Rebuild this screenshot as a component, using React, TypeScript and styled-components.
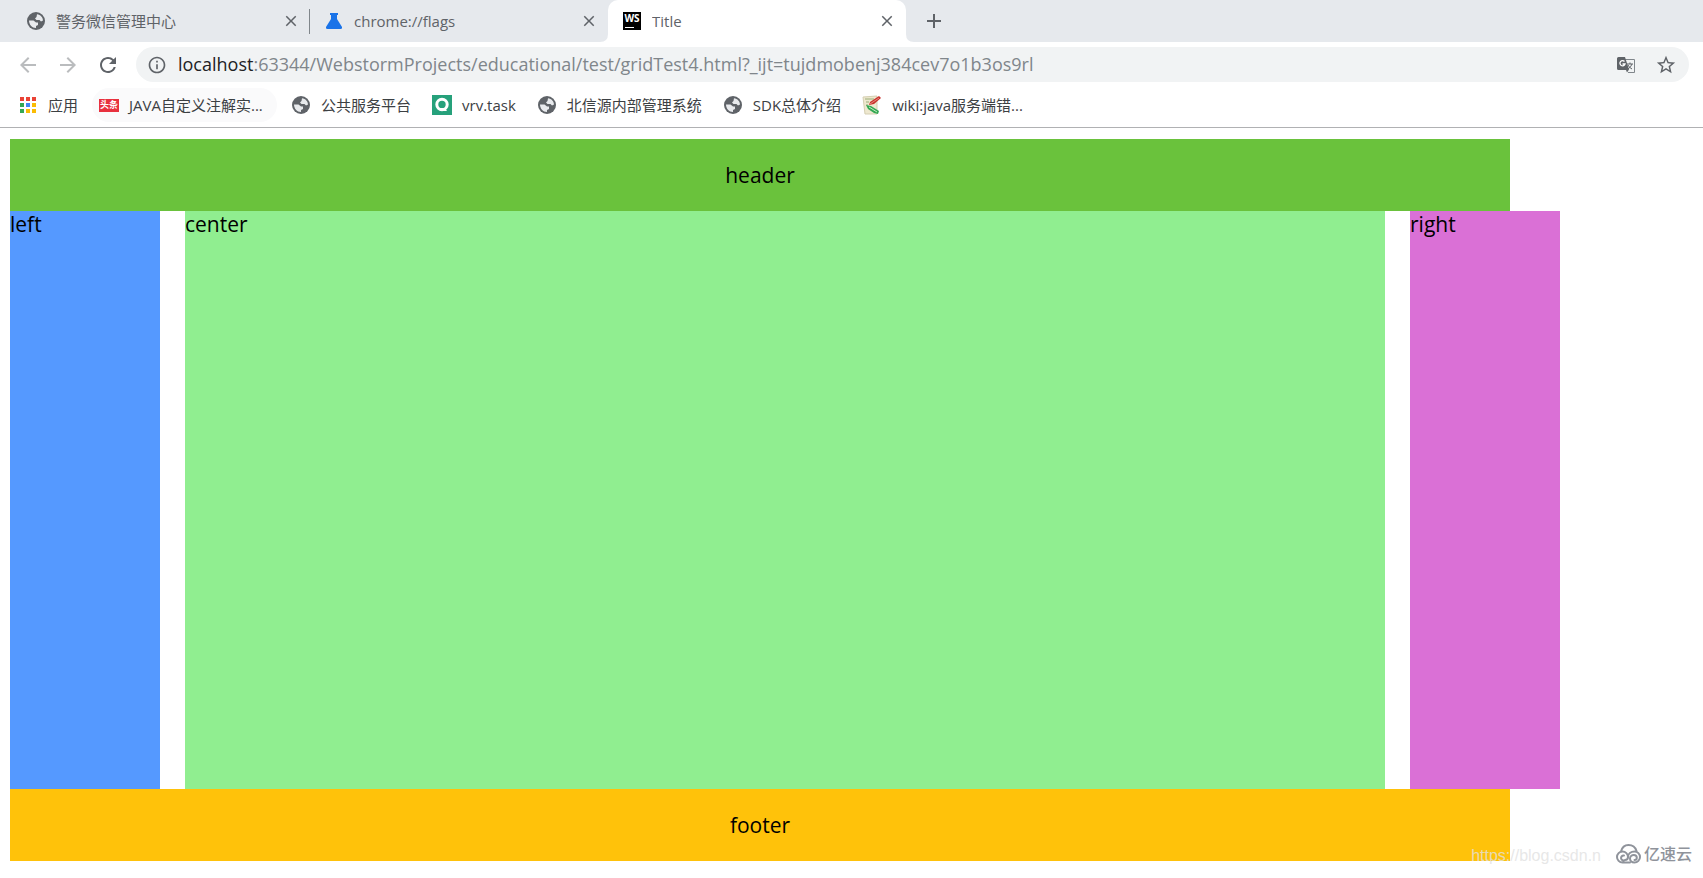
import React from 'react';
import styled, { createGlobalStyle } from 'styled-components';
import {
  MdAdd,
  MdArrowBack,
  MdArrowForward,
  MdClose,
  MdInfoOutline,
  MdRefresh,
  MdStarBorder,
} from 'react-icons/md';

const GlobalStyle = createGlobalStyle`
  * { box-sizing: border-box; }
  body {
    margin: 0;
    background: #fff;
    color: #000;
    font-family: "Open Sans", "Noto Sans CJK SC", sans-serif;
  }
`;

const Window = styled.div`
  display: flex;
  flex-direction: column;
  min-height: 100vh;
  overflow: hidden;
`;

const TabStrip = styled.nav`
  display: flex;
  height: 42px;
  padding-left: 12px;
  background: #e6e9ed;
`;

const Tab = styled.div<{ $active?: boolean; $divided?: boolean }>`
  position: relative;
  display: flex;
  align-items: center;
  gap: 11px;
  flex: 0 1 298px;
  min-width: 0;
  padding: 0 10px 0 15px;
  color: #5f6368;
  font-size: 15px;
  line-height: 20px;
  background: ${(p) => (p.$active ? '#fff' : 'transparent')};
  border-radius: 10px 10px 0 0;

  &::after {
    content: '';
    display: ${(p) => (p.$divided ? 'block' : 'none')};
    position: absolute;
    right: 0;
    top: 9px;
    width: 1px;
    height: 25px;
    background: #80868b;
  }
`;

const TabFoot = styled.svg<{ $side: 'left' | 'right' }>`
  position: absolute;
  bottom: 0;
  ${(p) => p.$side}: -8px;
  width: 8px;
  height: 8px;
`;

const TabTitle = styled.span`
  flex: 1;
  overflow: hidden;
  white-space: nowrap;
`;

const IconButton = styled.button<{ $size?: number; $faded?: boolean }>`
  display: flex;
  align-items: center;
  justify-content: center;
  flex: none;
  width: ${(p) => p.$size ?? 18}px;
  height: ${(p) => p.$size ?? 18}px;
  padding: 0;
  border: 0;
  background: none;
  color: ${(p) => (p.$faded ? '#babcbe' : '#5f6368')};
`;

const NewTabButton = styled(IconButton)`
  align-self: center;
  margin-left: 16px;
`;

const Toolbar = styled.div`
  display: flex;
  align-items: center;
  gap: 16px;
  height: 45px;
  padding: 0 14px 0 16px;
`;

const AddressBar = styled.div`
  display: flex;
  align-items: center;
  flex: 1;
  gap: 11px;
  height: 35px;
  min-width: 0;
  padding: 0 12px 0 11px;
  border-radius: 18px;
  background: #f1f3f4;
`;

const Url = styled.a`
  flex: 1;
  overflow: hidden;
  padding-bottom: 2px;
  color: #80868b;
  font-size: 18px;
  line-height: 26px;
  text-decoration: none;
  white-space: nowrap;
`;

const Host = styled.span`
  color: #202124;
`;

const AddressActions = styled.div`
  display: flex;
  align-items: center;
  gap: 20px;
`;

const BookmarkBar = styled.nav`
  display: flex;
  align-items: center;
  gap: 21px;
  height: 41px;
  padding: 0 18px 4px;
  border-bottom: 1px solid #b0b1b3;
`;

const Bookmark = styled.a<{ $truncated?: boolean; $hovered?: boolean }>`
  display: flex;
  align-items: center;
  gap: 10px;
  min-width: ${(p) => (p.$truncated ? '171px' : 'auto')};
  color: #3c4043;
  font-size: 15px;
  line-height: 20px;
  text-decoration: none;
  white-space: nowrap;
  border-radius: 10px;
  background: ${(p) => (p.$hovered ? '#fafafb' : 'transparent')};
  box-shadow: ${(p) => (p.$hovered ? '0 0 0 7px #fafafb' : 'none')};
`;

const IconSlot = styled.span<{ $size?: number }>`
  display: flex;
  align-items: center;
  justify-content: center;
  flex: none;
  width: ${(p) => p.$size ?? 20}px;
  height: ${(p) => p.$size ?? 20}px;
`;

const ToutiaoIcon = styled.span`
  width: 20px;
  height: 13px;
  background: #e8313e;
  color: #fff;
  font-size: 9px;
  font-weight: 700;
  line-height: 12px;
  text-align: center;
`;

const WebStormIcon = styled.span`
  flex: none;
  width: 18px;
  height: 18px;
  background: #000;
  color: #fff;
  font-size: 10px;
  font-weight: 700;
  line-height: 13px;
  text-align: center;

  &::after {
    content: '';
    display: block;
    width: 9px;
    height: 1px;
    margin: 2px 0 0 2px;
    background: #fff;
  }
`;

const Viewport = styled.main`
  display: flex;
  flex-direction: column;
  flex: 1;
  padding: 11px 193px 17px 10px;
  font-size: 21px;
  line-height: 26px;
`;

const Band = styled.div<{ $color: string }>`
  display: flex;
  align-items: center;
  justify-content: center;
  height: 72px;
  background: ${(p) => p.$color};
`;

const Columns = styled.div`
  display: grid;
  grid-template-columns: 10% 80% 10%;
  column-gap: 25px;
  flex: 1;
  min-height: 200px;
`;

const Column = styled.section<{ $color: string }>`
  background: ${(p) => p.$color};
`;

const Watermarks = styled.div`
  position: absolute;
  right: 11px;
  bottom: 10px;
  display: flex;
  align-items: center;
  gap: 15px;
`;

const BlogMark = styled.span`
  color: rgba(225, 225, 225, 0.8);
  font-family: "Liberation Sans", sans-serif;
  font-size: 16px;
  line-height: 20px;
`;

const CloudMark = styled.span`
  display: flex;
  align-items: center;
  gap: 2px;
  padding-bottom: 4px;
  color: #8f939b;
  font-size: 16px;
  font-weight: 500;
  line-height: 20px;
`;

function Globe() {
  return (
    <svg width="18" height="18" viewBox="0 0 18 18" aria-hidden="true">
      <circle cx="9" cy="9" r="9" fill="#5f6368" />
      <path
        d="M10 2.2C13.5 2.5 16 5.500 16 8.500L14 9.500 12.500 8H9.500L8 6.500 9.500 5ZM2 8.500H6.500L9 10.500H11V13L9 14V16C5 16 2 12.500 2 8.500Z"
        fill="#e8eaed"
      />
    </svg>
  );
}

function Flask() {
  return (
    <svg width="16" height="16" viewBox="0 0 16 16" aria-hidden="true">
      <path d="M4 0h8v2h-1v4l5 8q.500 2-1.500 2h-13Q-.500 16 0 14L5 6V2H4Z" fill="#1a73e8" />
    </svg>
  );
}

function AppsGrid() {
  const colors = ['#ea4335', '#ea4335', '#ea4335', '#34a853', '#4285f4', '#fbbc04', '#34a853', '#fbbc04', '#fbbc04'];
  return (
    <svg width="16" height="16" viewBox="0 0 16 16" aria-hidden="true">
      {colors.map((c, i) => (
        <rect key={i} x={(i % 3) * 6} y={Math.floor(i / 3) * 6} width="4" height="4" fill={c} />
      ))}
    </svg>
  );
}

function VrvIcon() {
  return (
    <svg width="20" height="20" viewBox="0 0 20 20" aria-hidden="true">
      <rect width="20" height="20" fill="#26a17b" />
      <circle cx="10" cy="9.500" r="5.200" fill="none" stroke="#fff" strokeWidth="3" />
      <path d="M8 13h5l2 3H8Z" fill="#fff" />
    </svg>
  );
}

function WikiIcon() {
  return (
    <svg width="20" height="20" viewBox="0 0 20 20" aria-hidden="true">
      <path d="M1 2l14-1v18H3Z" fill="#eee8cf" stroke="#d5cfb2" />
      <path d="M3 4h9M4 7h3M4 10h2" stroke="#9aae79" />
      <path d="M17 1l2 2-7 6-5 1 1-3Z" fill="#c9302c" />
      <path d="M8 9l9-6" stroke="#e88a80" />
      <path d="M4 10l5 1 8 5-1 3-4-1-6-4Z" fill="#34a853" />
      <path d="M7 12l8 5" stroke="#c4ecc4" />
    </svg>
  );
}

function TranslateIcon() {
  return (
    <svg width="18" height="18" viewBox="0 0 18 18" aria-hidden="true">
      <path d="M8 3.500h9.500v13H11" fill="#f1f3f4" stroke="#80868b" />
      <path d="M10 8h6M13 6.500V8M15 8q-1 3-4 5M11 9q1 2.500 4 4" fill="none" stroke="#5f6368" />
      <path d="M1.500 1H8l4 12.500L10 16.500 9 14H1.500Q0 14 0 12.500v-10Q0 1 1.500 1Z" fill="#5f6368" />
      <path d="M7.500 5.500A2.600 2.600 0 1 0 8 8H5.500" fill="none" stroke="#fff" strokeWidth="1.300" />
    </svg>
  );
}

function CloudLogo() {
  return (
    <svg width="26" height="20" viewBox="0 0 26 20" fill="none" stroke="#8f939b" strokeWidth="2" strokeLinecap="round" aria-hidden="true">
      <path d="M5 7.500C6 3.500 9 1 12.500 1c4 0 7 2.500 8 6" />
      <path d="M14 18.500H6.500a5.500 5.500 0 1 1 5.500-5.500c0 2-1.500 3-3 3a2.500 2.500 0 1 1-1-4.500" />
      <path d="M12 13c0-3.500 3-5.500 6.500-5.500a5.500 5.500 0 0 1 0 11c-3 0-4.500-2-4.500-4s1.800-3.500 3.800-3.500 3 1.500 3 2.800-1 2.200-2.300 2.200" />
    </svg>
  );
}

function CloseButton({ label }: { label: string }) {
  return (
    <IconButton aria-label={label}>
      <MdClose size={18} />
    </IconButton>
  );
}

const bookmarks = [
  { title: '应用', icon: <AppsGrid /> },
  { title: 'JAVA自定义注解实...', icon: <ToutiaoIcon>头条</ToutiaoIcon>, truncated: true, hovered: true },
  { title: '公共服务平台', icon: <Globe /> },
  { title: 'vrv.task', icon: <VrvIcon /> },
  { title: '北信源内部管理系统', icon: <Globe /> },
  { title: 'SDK总体介绍', icon: <Globe /> },
  { title: 'wiki:java服务端错...', icon: <WikiIcon />, truncated: true },
];

export default function App() {
  return (
    <Window>
      <GlobalStyle />
      <TabStrip>
        <Tab $divided>
          <IconSlot $size={18}><Globe /></IconSlot>
          <TabTitle>警务微信管理中心</TabTitle>
          <CloseButton label="Close tab" />
        </Tab>
        <Tab>
          <IconSlot $size={18}><Flask /></IconSlot>
          <TabTitle>chrome://flags</TabTitle>
          <CloseButton label="Close tab" />
        </Tab>
        <Tab $active>
          <TabFoot $side="left" viewBox="0 0 8 8"><path d="M8 0v8H0q8 0 8-8Z" fill="#fff" /></TabFoot>
          <WebStormIcon>WS</WebStormIcon>
          <TabTitle>Title</TabTitle>
          <CloseButton label="Close tab" />
          <TabFoot $side="right" viewBox="0 0 8 8"><path d="M0 0v8h8q-8 0-8-8Z" fill="#fff" /></TabFoot>
        </Tab>
        <NewTabButton aria-label="New tab" $size={24}><MdAdd size={24} /></NewTabButton>
      </TabStrip>
      <Toolbar>
        <IconButton aria-label="Back" $size={24} $faded><MdArrowBack size={24} /></IconButton>
        <IconButton aria-label="Forward" $size={24} $faded><MdArrowForward size={24} /></IconButton>
        <IconButton aria-label="Reload" $size={24}><MdRefresh size={24} /></IconButton>
        <AddressBar>
          <IconButton aria-label="Site information" $size={20}><MdInfoOutline size={20} /></IconButton>
          <Url href="#">
            <Host>localhost</Host>:63344/WebstormProjects/educational/test/gridTest4.html?_ijt=tujdmobenj384cev7o1b3os9rl
          </Url>
          <AddressActions>
            <IconButton aria-label="Translate"><TranslateIcon /></IconButton>
            <IconButton aria-label="Bookmark this page" $size={22}><MdStarBorder size={22} /></IconButton>
          </AddressActions>
        </AddressBar>
      </Toolbar>
      <BookmarkBar>
        {bookmarks.map((b) => (
          <Bookmark key={b.title} href="#" $truncated={b.truncated} $hovered={b.hovered}>
            <IconSlot>{b.icon}</IconSlot>
            {b.title}
          </Bookmark>
        ))}
      </BookmarkBar>
      <Viewport>
        <Band as="header" $color="#6ac23c">header</Band>
        <Columns>
          <Column $color="#5599ff">left</Column>
          <Column $color="#90ee90">center</Column>
          <Column $color="#da70d6">right</Column>
        </Columns>
        <Band as="footer" $color="#ffc20a">footer</Band>
      </Viewport>
      <Watermarks>
        <BlogMark>https://blog.csdn.n</BlogMark>
        <CloudMark><CloudLogo />亿速云</CloudMark>
      </Watermarks>
    </Window>
  );
}
